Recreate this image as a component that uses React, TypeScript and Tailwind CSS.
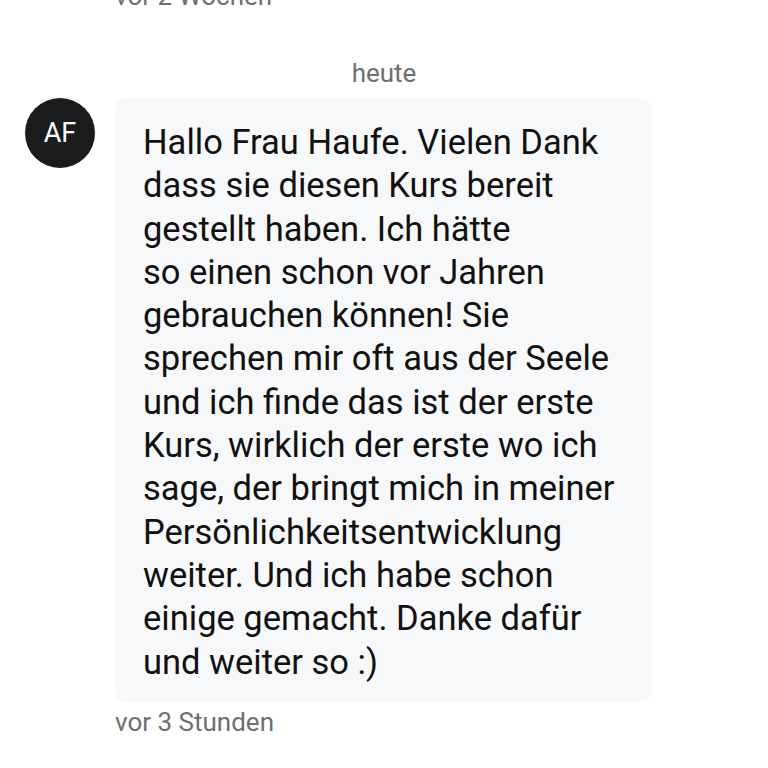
import React from "react";

const lines = [
  "Hallo Frau Haufe. Vielen Dank",
  "dass sie diesen Kurs bereit",
  "gestellt haben. Ich hätte",
  "so einen schon vor Jahren",
  "gebrauchen können! Sie",
  "sprechen mir oft aus der Seele",
  "und ich finde das ist der erste",
  "Kurs, wirklich der erste wo ich",
  "sage, der bringt mich in meiner",
  "Persönlichkeitsentwicklung",
  "weiter. Und ich habe schon",
  "einige gemacht. Danke dafür",
  "und weiter so :)",
];

export default function App() {
  return (
    <div
      className="w-[768px] h-[768px] bg-white overflow-hidden flex flex-col"
      style={{ fontFamily: "Roboto, 'Noto Sans', sans-serif" }}
    >
      <div className="pl-[115px] mt-[-20px] text-[26px] leading-[32px] text-[#6f6f6f] whitespace-nowrap">
        vor 2 Wochen
      </div>
      <div className="mt-[45px] text-center text-[26px] leading-[32px] text-[#6f6f6f]">
        heute
      </div>
      <div className="flex mt-[9px]">
        <div className="ml-[25px] w-[70px] h-[70px] rounded-full bg-[#1b1c1e] flex items-center justify-center text-white text-[27px] shrink-0">
          AF
        </div>
        <div className="ml-[20px] w-[537px] rounded-[12px] bg-[#f7f8fa] pl-[28px] pt-[23px] pb-[18px]">
          {lines.map((l, i) => (
            <div key={i} className="text-[34.5px] leading-[43.3px] text-[#111111] whitespace-nowrap">
              {l}
            </div>
          ))}
        </div>
      </div>
      <div className="pl-[115px] mt-[4px] text-[26px] leading-[32px] text-[#6f6f6f]">
        vor 3 Stunden
      </div>
    </div>
  );
}
